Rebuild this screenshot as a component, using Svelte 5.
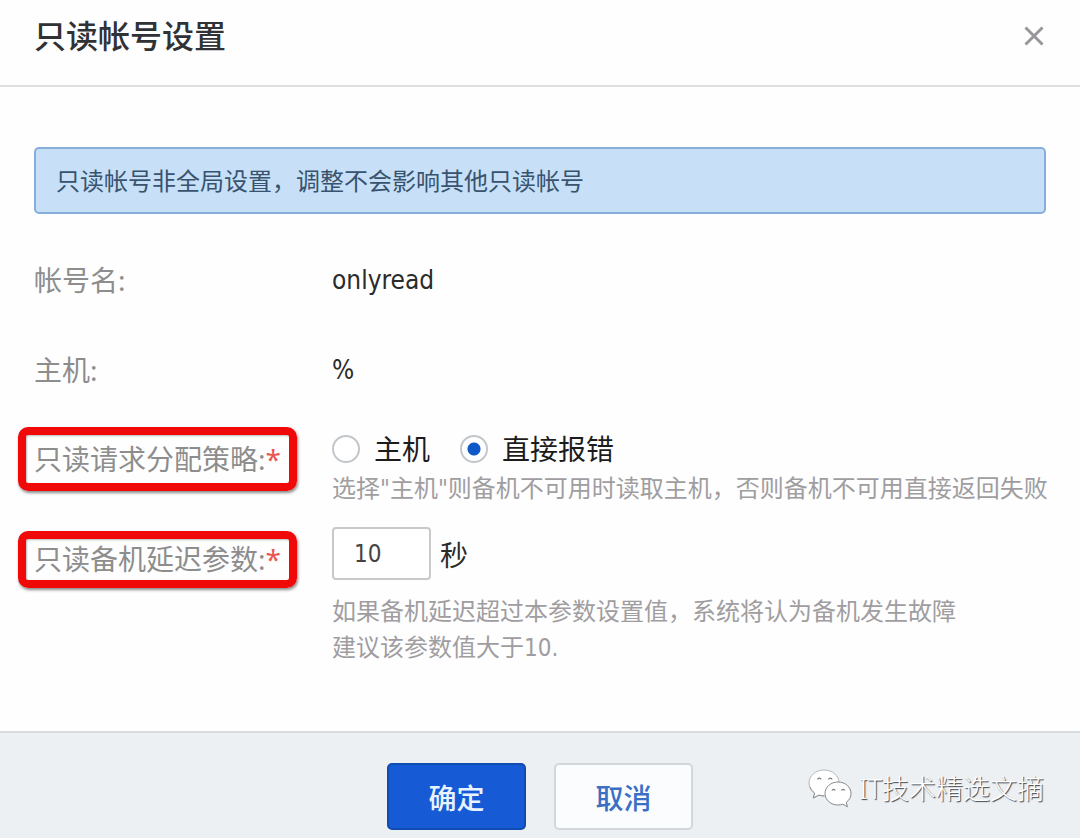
<script>
  let strategy = $state('error');
  let delay = $state('10');
</script>

<div class="dialog" role="dialog" aria-labelledby="dialog-title">
  <header>
    <h1 id="dialog-title">只读帐号设置</h1>
    <button type="button" class="close" aria-label="关闭">
      <svg width="20" height="20" viewBox="0 0 20 20" aria-hidden="true">
        <path d="M1.5 1.5 18.5 18.5M18.5 1.5 1.5 18.5" stroke="#96979b" stroke-width="3" fill="none" />
      </svg>
    </button>
  </header>

  <form id="settings" onsubmit={(e) => e.preventDefault()}>
    <p class="notice">只读帐号非全局设置，调整不会影响其他只读帐号</p>

    <div class="row plain">
      <span class="name">帐号名:</span>
      <span class="value">onlyread</span>
    </div>
    <div class="row plain">
      <span class="name">主机:</span>
      <span class="value">%</span>
    </div>

    <div class="row policy" role="radiogroup" aria-labelledby="policy-name">
      <span class="name marked" id="policy-name">只读请求分配策略:<b>*</b></span>
      <div class="field">
        <div class="options">
          <label><input type="radio" name="strategy" value="host" bind:group={strategy} />主机</label>
          <label><input type="radio" name="strategy" value="error" bind:group={strategy} />直接报错</label>
        </div>
        <p class="hint">选择"主机"则备机不可用时读取主机，否则备机不可用直接返回失败</p>
      </div>
    </div>

    <div class="row delay">
      <label class="name marked" for="delay">只读备机延迟参数:<b>*</b></label>
      <div class="field">
        <div class="amount">
          <input id="delay" type="text" inputmode="numeric" bind:value={delay} />
          <span>秒</span>
        </div>
        <p class="hint">如果备机延迟超过本参数设置值，系统将认为备机发生故障<br />建议该参数值大于10.</p>
      </div>
    </div>
  </form>

  <footer>
    <button type="submit" form="settings" class="action primary">确定</button>
    <button type="button" class="action">取消</button>
    <div class="source">
      <svg width="44" height="40" viewBox="0 0 44 40" aria-hidden="true">
        <g fill="#fff" stroke="#85898d" stroke-width="1" stroke-linejoin="round">
          <path stroke="#b4b8bb" d="M16 1C7.600 1 1 6.800 1 14c0 4.200 2.200 7.700 5.700 10.100L5.300 29l5.600-2.900c1.600.500 3.300.800 5.100.800 8.400 0 15-5.800 15-13S24.400 1 16 1Z" />
          <path d="M2 18c.900 2.500 2.500 4.500 4.700 6.100L5.300 29l5.600-2.900c1.600.500 3.300.800 5.100.800" />
          <path d="M30 13c-7.300 0-13 5.200-13 11.500S22.700 36 30 36c1.700 0 3.300-.3 4.800-.8l4.700 2.600-1.300-4.400c3-2.100 4.800-5.300 4.800-8.900C43 18.200 37.300 13 30 13Z" />
        </g>
        <g fill="none" stroke="#777b7f" stroke-width="1.200">
          <path d="M9.500 10.500a1.900 1.900 0 0 1 3.600 0M20.500 10.500a1.900 1.900 0 0 1 3.600 0M24 21.500a1.700 1.700 0 0 1 3.200 0M33.500 21.500a1.700 1.700 0 0 1 3.200 0" />
        </g>
      </svg>
      <span>IT技术精选文摘</span>
    </div>
  </footer>
</div>

<style>
  :global(body) {
    margin: 0;
    background: #fff;
  }

  .dialog {
    display: flex;
    flex-direction: column;
    min-height: 100vh;
    font-family: 'Noto Sans', 'Noto Sans CJK SC', sans-serif;
    font-size: 28px;
    color: #2b2b2b;
    background: #fefefe;
  }

  .dialog * {
    box-sizing: border-box;
  }

  header {
    display: flex;
    align-items: center;
    justify-content: space-between;
    padding: 12px 36px 25px 34px;
    border-bottom: 2px solid #dedfe0;
  }

  h1 {
    margin: 0;
    font-size: 32px;
    line-height: 48px;
    font-weight: 500;
    color: #303236;
  }

  button,
  input {
    font: inherit;
  }

  .close {
    display: flex;
    padding: 0;
    border: 0;
    background: none;
  }

  form {
    flex: 1;
    padding: 60px 34px 65px;
  }

  .notice {
    margin: 0 0 36px;
    padding: 14px 20px;
    border: 2px solid #87aeda;
    border-radius: 5px;
    background: #c7e0f7;
    color: #37536f;
    font-size: 24px;
    line-height: 35px;
  }

  .row {
    display: grid;
    grid-template-columns: 298px 1fr;
    align-items: start;
    margin-right: -24px;
  }

  .plain {
    line-height: 60px;
    margin-bottom: 30px;
  }

  .name {
    color: #8d8d8d;
  }

  .value {
    font-family: 'DejaVu Sans Condensed', 'Noto Sans', sans-serif;
    font-size: 26px;
  }

  .marked {
    justify-self: start;
    margin-left: -16px;
    padding: 0 8px;
    border: 8px solid #ef0909;
    border-radius: 10px;
    line-height: 48px;
    white-space: nowrap;
    box-shadow: 1px 2px 3px #8a8a8a, inset 1px 1px 2px #b9b9b9;
  }

  .marked b {
    color: #ea5550;
    font-weight: 400;
  }

  .policy {
    margin-top: -3px;
    margin-bottom: 20px;
  }

  .delay .marked {
    margin-top: 4px;
    line-height: 41px;
  }

  .options {
    display: flex;
    gap: 30px;
    line-height: 44px;
    color: #1c1c1c;
  }

  .options label {
    display: flex;
    align-items: center;
    gap: 14px;
  }

  .options input {
    appearance: none;
    width: 28px;
    height: 28px;
    margin: 0;
    border: 2px solid #c3c7cb;
    border-radius: 50%;
    background: #fff;
  }

  .options input:checked {
    background: radial-gradient(circle, #0e58c8 6px, #fff 7px);
  }

  .hint {
    margin: 0;
    font-family: 'DejaVu Sans Condensed', 'Noto Sans CJK SC', sans-serif;
    font-size: 24px;
    line-height: 36px;
    color: #a09da0;
  }

  .amount {
    display: flex;
    align-items: center;
    gap: 9px;
    margin-bottom: 14px;
  }

  .amount input {
    width: 99px;
    height: 53px;
    padding: 0 20px;
    border: 2px solid #c9c9cb;
    border-radius: 4px;
    background: #fff;
    color: #444;
    font-family: 'DejaVu Sans Condensed', 'Noto Sans', sans-serif;
    font-size: 24px;
  }

  footer {
    position: relative;
    display: flex;
    justify-content: center;
    gap: 28px;
    padding: 30px 34px 8px;
    border-top: 2px solid #d9dde0;
    background: #ecf0f3;
  }

  .action {
    width: 139px;
    height: 67px;
    padding: 0;
    border: 2px solid #d3d6da;
    border-radius: 5px;
    background: #fbfcfe;
    color: #3a6fc4;
    font-weight: 500;
  }

  .primary {
    border-color: #104bb0;
    background: #165bd5;
    color: #e8f3ff;
  }

  .source {
    position: absolute;
    top: 36px;
    right: 36px;
    display: flex;
    align-items: center;
    gap: 7px;
    color: #fff;
    font-size: 27px;
    font-weight: 300;
    line-height: 40px;
    white-space: nowrap;
    text-shadow: 1px 1px 1px #3c4147;
  }
</style>
